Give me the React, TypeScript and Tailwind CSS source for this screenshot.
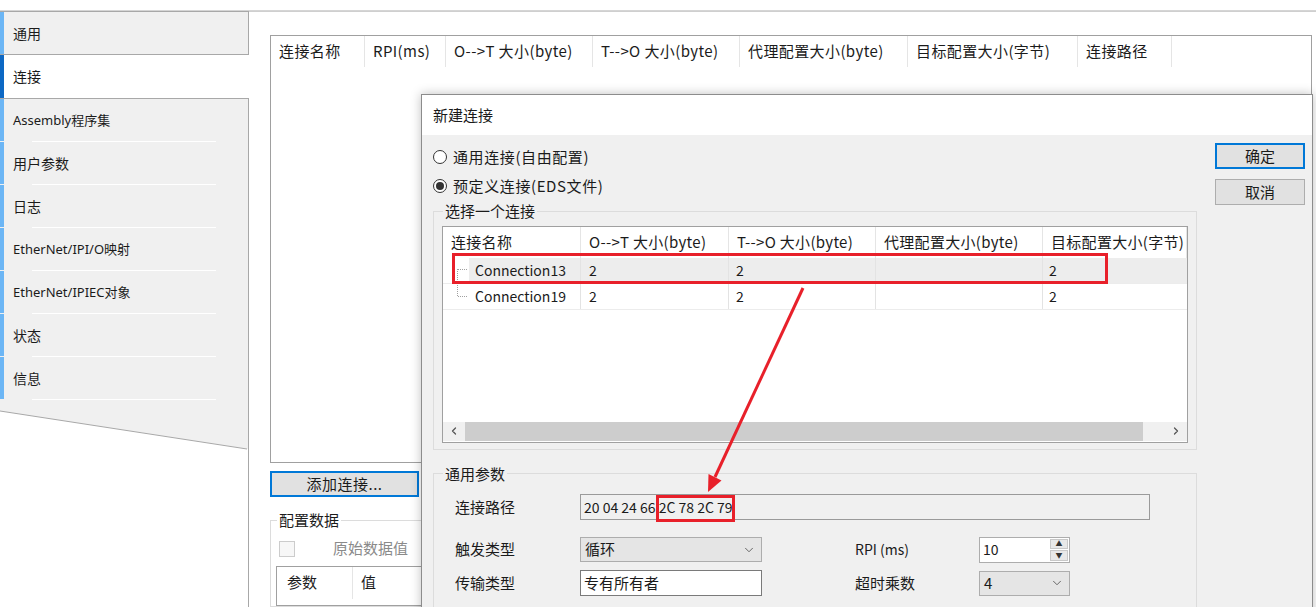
import React from 'react'
import { ChevronDown, ChevronLeft, ChevronRight } from 'lucide-react'

const sideTabs = ['Assembly程序集', '用户参数', '日志', 'EtherNet/IPI/O映射', 'EtherNet/IPIEC对象', '状态', '信息']

const mainCols = [
    { title: '连接名称', w: 'w-[94px]' },
    { title: 'RPI(ms)', w: 'w-[81px]' },
    { title: 'O-->T 大小(byte)', w: 'w-[147px]' },
    { title: 'T-->O 大小(byte)', w: 'w-[147px]' },
    { title: '代理配置大小(byte)', w: 'w-[168px]' },
    { title: '目标配置大小(字节)', w: 'w-[170px]' },
    { title: '连接路径', w: 'w-[94px]' },
]

const edsCols = [
    { title: '连接名称', w: 'w-[138px]' },
    { title: 'O-->T 大小(byte)', w: 'w-[148px]' },
    { title: 'T-->O 大小(byte)', w: 'w-[147px]' },
    { title: '代理配置大小(byte)', w: 'w-[167px]' },
    { title: '目标配置大小(字节)', w: 'flex-1' },
]

const edsRows = [
    { name: 'Connection13', ot: '2', to: '2', proxy: '', target: '2', selected: true },
    { name: 'Connection19', ot: '2', to: '2', proxy: '', target: '2', selected: false },
]

const Radio = ({ checked, label }: { checked?: boolean; label: string }) => (
    <div className="flex items-center h-[20px]">
        <span className="w-[14px] h-[14px] rounded-full border border-[#333] bg-white flex items-center justify-center">
            {checked && <span className="w-[8px] h-[8px] rounded-full bg-[#333]" />}
        </span>
        <span className="ml-[6px] tracking-[0.6px]">{label}</span>
    </div>
)

const Combo = ({ value, w }: { value: string; w: string }) => (
    <div className={`${w} h-[25px] bg-[#e5e5e5] border border-[#adadad] flex items-center justify-between pl-[4px] pr-[5px]`}>
        <span>{value}</span>
        <ChevronDown className="w-[14px] h-[14px] text-[#555]" strokeWidth={1.5} />
    </div>
)

const Sidebar = () => (
    <div className="w-[249px] shrink-0 flex flex-col font-['Noto_Sans','Noto_Sans_CJK_SC',sans-serif] text-[14px]">
        <div className="h-[44px] flex bg-[#f0f0f0] border-t border-r border-b border-[#a8a8a8]">
            <span className="w-[4px] bg-[#6cb6f5]" />
            <span className="pl-[9px] flex items-center">通用</span>
        </div>
        <div className="h-[43px] flex bg-white">
            <span className="w-[4px] bg-[#0d68c4]" />
            <span className="pl-[9px] flex items-center">连接</span>
        </div>
        <div className="bg-[#f0f0f0] border-t border-r border-[#a8a8a8] pb-[10px]">
            {sideTabs.map((t) => (
                <div key={t} className="h-[43px] flex relative">
                    <span className="w-[4px] bg-[#6cb6f5] mb-[1px]" />
                    <span className={`pl-[9px] flex items-center ${t.startsWith('E') || t.startsWith('A') ? 'text-[13px]' : ''}`}>{t}</span>
                    <span className="absolute bottom-0 left-[32px] w-[184px] h-[1px] bg-white" />
                </div>
            ))}
        </div>
        {/* slanted lower edge of the tab strip */}
        <svg width="249" height="40" className="block">
            <polygon points="0,0 248,0 248,39 0,1" fill="#f0f0f0" />
            <line x1="0" y1="1" x2="247" y2="39" stroke="#a8a8a8" strokeWidth="1" />
            <line x1="248.5" y1="0" x2="248.5" y2="40" stroke="#a8a8a8" strokeWidth="1" />
        </svg>
        <div className="flex-1 border-r border-[#a8a8a8]" />
    </div>
)

const MainPanel = () => (
    <div className="flex-1 border-t border-[#cfcfcf] pl-[21px] pt-[23px]">
        <div className="w-[1042px] h-[428px] border border-[#a0a0a0] bg-white">
            <div className="flex h-[31px] text-[15px]">
                {mainCols.map((c) => (
                    <div key={c.title} className={`${c.w} border-r border-[#e5e5e5] pl-[8px] flex items-center whitespace-nowrap tracking-[0.4px]`}>
                        {c.title}
                    </div>
                ))}
            </div>
        </div>
        <button className="mt-[8px] w-[149px] h-[26px] bg-[#e1e1e1] border-2 border-[#0078d7] flex items-center justify-center text-[15px] tracking-[0.5px]">
            添加连接...
        </button>
        <fieldset className="mt-[12px] w-[420px] border border-[#dcdcdc] pl-[8px] pt-[9px] text-[15px]">
            <legend className="-ml-[2px] px-[2px]">配置数据</legend>
            <div className="flex items-center h-[16px]">
                <span className="w-[16px] h-[16px] border border-[#cccccc] bg-[#f7f7f7]" />
                <span className="ml-[38px] text-[#8a8a8a]">原始数据值</span>
            </div>
            <div className="mt-[9px] -ml-[3px] h-[40px] border border-[#a0a0a0] bg-white flex">
                <div className="w-[76px] border-r border-[#e5e5e5] pl-[10px] h-[32px] flex items-center">参数</div>
                <div className="pl-[8px] h-[32px] flex items-center">值</div>
            </div>
        </fieldset>
    </div>
)

const TreeLines = ({ first }: { first: boolean }) => (
    <svg width="12" height="26" className="shrink-0">
        <line x1="0.5" y1={first ? 12 : 0} x2="0.5" y2={first ? 26 : 13} stroke="#a0a0a0" strokeDasharray="1 1" />
        <line x1="1" y1={first ? 12.5 : 13.5} x2="11" y2={first ? 12.5 : 13.5} stroke="#a0a0a0" strokeDasharray="1 1" />
    </svg>
)

const NewConnectionDialog = () => (
    <div className="absolute left-[421px] top-[94px] w-[892px] h-[530px] border border-[#8c8c8c] bg-[#f0f0f0] text-[15px] shadow-[0_0_10px_rgba(0,0,0,0.25)]">
        <div className="h-[40px] bg-white pl-[11px] flex items-center">新建连接</div>
        <div className="flex pl-[11px]">
            <div className="w-[764px]">
                <div className="mt-[12px] flex flex-col gap-[9px]">
                    <Radio label="通用连接(自由配置)" />
                    <Radio checked label="预定义连接(EDS文件)" />
                </div>
                <fieldset className="mt-[4px] border border-[#dcdcdc] px-[8px] pb-[6px]">
                    <legend className="ml-[1px] px-[2px]">选择一个连接</legend>
                    <div className="mt-[3px] h-[217px] border border-[#a0a0a0] bg-white flex flex-col">
                        <div className="flex h-[31px] shrink-0">
                            {edsCols.map((c) => (
                                <div key={c.title} className={`${c.w} border-r border-[#e5e5e5] pl-[8px] flex items-center whitespace-nowrap overflow-hidden tracking-[0.3px]`}>
                                    {c.title}
                                </div>
                            ))}
                        </div>
                        {edsRows.map((r, i) => (
                            <div key={r.name} className="flex h-[26px] border-b border-[#ececec] text-[14px]">
                                <div className="w-[138px] border-r border-[#e3e3e3] flex items-center pl-[14px]">
                                    <TreeLines first={i === 0} />
                                    <span className={`flex-1 h-full flex items-center pl-[6px] ${r.selected ? 'bg-[#ededed]' : ''}`}>{r.name}</span>
                                </div>
                                <div className={`w-[148px] border-r border-[#e3e3e3] pl-[8px] flex items-center ${r.selected ? 'bg-[#ededed]' : ''}`}>{r.ot}</div>
                                <div className={`w-[147px] border-r border-[#e3e3e3] pl-[7px] flex items-center ${r.selected ? 'bg-[#ededed]' : ''}`}>{r.to}</div>
                                <div className={`w-[167px] border-r border-[#e3e3e3] pl-[8px] flex items-center ${r.selected ? 'bg-[#ededed]' : ''}`}>{r.proxy}</div>
                                <div className={`flex-1 pl-[6px] flex items-center ${r.selected ? 'bg-[#ededed]' : ''}`}>{r.target}</div>
                            </div>
                        ))}
                        <div className="flex-1" />
                        <div className="h-[19px] mb-[1px] bg-[#f0f0f0] flex items-center">
                            <div className="w-[22px] flex justify-center">
                                <ChevronLeft className="w-[12px] h-[12px] text-[#555]" strokeWidth={2.5} />
                            </div>
                            <div className="w-[678px] h-full bg-[#cdcdcd]" />
                            <div className="flex-1" />
                            <div className="w-[22px] flex justify-center">
                                <ChevronRight className="w-[12px] h-[12px] text-[#555]" strokeWidth={2.5} />
                            </div>
                        </div>
                    </div>
                </fieldset>
                <fieldset className="mt-[13px] h-[160px] border border-[#dcdcdc] pl-[21px]">
                    <legend className="ml-[-12px] px-[2px]">通用参数</legend>
                    <div className="mt-[9px] flex items-center h-[26px]">
                        <span className="w-[125px]">连接路径</span>
                        <div className="w-[570px] h-[26px] border border-[#9a9a9a] bg-[#f0f0f0] pl-[3px] flex items-center text-[14px]">
                            20 04 24 66 2C 78 2C 79
                        </div>
                    </div>
                    <div className="mt-[17px] flex items-center h-[25px]">
                        <span className="w-[125px]">触发类型</span>
                        <Combo value="循环" w="w-[182px]" />
                        <span className="ml-[93px] w-[124px] text-[14px]">RPI (ms)</span>
                        <div className="w-[91px] h-[26px] border border-[#adadad] bg-white flex items-center justify-between pl-[3px] pr-[1px]">
                            <span className="text-[14px]">10</span>
                            <div className="w-[18px] h-[22px] flex flex-col gap-[1px]">
                                <div className="flex-1 bg-[#e8e8e8] border border-[#c8c8c8] flex items-center justify-center text-[7px] leading-none text-[#333]">▲</div>
                                <div className="flex-1 bg-[#e8e8e8] border border-[#c8c8c8] flex items-center justify-center text-[7px] leading-none text-[#333]">▼</div>
                            </div>
                        </div>
                    </div>
                    <div className="mt-[8px] flex items-center h-[26px]">
                        <span className="w-[125px]">传输类型</span>
                        <div className="w-[182px] h-[26px] border border-[#7a7a7a] bg-white pl-[3px] flex items-center">专有所有者</div>
                        <span className="ml-[93px] w-[124px]">超时乘数</span>
                        <Combo value="4" w="w-[91px]" />
                    </div>
                </fieldset>
            </div>
            <div className="ml-[18px] w-[90px] pt-[8px] flex flex-col gap-[10px]">
                <button className="h-[26px] bg-[#e1e1e1] border-2 border-[#0078d7] flex items-center justify-center">确定</button>
                <button className="h-[26px] bg-[#e1e1e1] border border-[#adadad] flex items-center justify-center">取消</button>
            </div>
        </div>
    </div>
)

// red call-outs drawn on top of the window
const Callouts = () => (
    <svg className="absolute inset-0 pointer-events-none" width="1316" height="607">
        <rect x="453.5" y="254.5" width="653" height="28" fill="none" stroke="#e8202a" strokeWidth="3" />
        <rect x="657.5" y="496.5" width="76" height="24" fill="none" stroke="#e8202a" strokeWidth="3" />
        <line x1="803" y1="288" x2="715" y2="477" stroke="#e8202a" strokeWidth="3" />
        <polygon points="708,492 721.5,480.5 708.5,474" fill="#e8202a" />
    </svg>
)

const App = () => {
    return (
        <div className="relative w-[1316px] h-[607px] overflow-hidden bg-white text-[14px] text-[#1b1b1b] font-['Noto_Sans_CJK_SC','Noto_Sans',sans-serif]">
            <div className="h-[11px] border-b border-[#d5d5d5]" />
            <div className="flex h-[596px]">
                <Sidebar />
                <MainPanel />
            </div>
            <NewConnectionDialog />
            <Callouts />
        </div>
    )
}

export default App
